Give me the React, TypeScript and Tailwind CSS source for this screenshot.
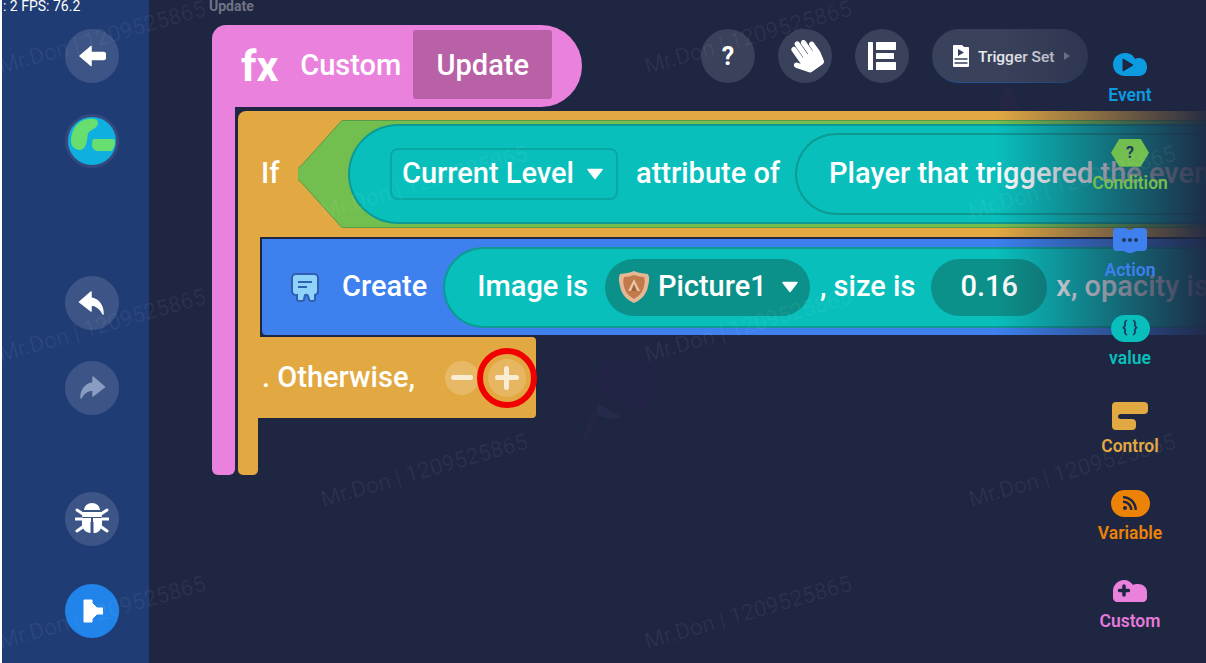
import React from "react";
import { FaHandPaper, FaRss } from "react-icons/fa";

const roboto = "font-['Roboto',sans-serif]";

function Watermark({ x, y }: { x: number; y: number }) {
  return (
    <div
      className="absolute text-[22.4px] leading-none whitespace-nowrap text-white/[0.06] -rotate-[16deg] -translate-x-1/2 -translate-y-1/2 pointer-events-none z-30"
      style={{ left: x, top: y }}
    >
      Mr.Don | 1209525865
    </div>
  );
}

function CircleBtn({ children, className = "bg-white/[0.13]" }: { children: React.ReactNode; className?: string }) {
  return <div className={`w-[54px] h-[54px] rounded-full flex items-center justify-center shrink-0 ${className}`}>{children}</div>;
}

function Caret({ className = "" }: { className?: string }) {
  return (
    <svg width="18" height="12" viewBox="0 0 18 12" className={className}>
      <path d="M2 1.5h14L9 10.5z" fill="#fff" stroke="#fff" strokeWidth="1.5" strokeLinejoin="round" />
    </svg>
  );
}

function Sidebar() {
  return (
    <div className="w-[147px] h-full bg-[#1f3c74] flex flex-col pl-[63px] pt-[29px] shrink-0">
      <CircleBtn>
        <svg width="28" height="22" viewBox="0 0 28 22">
          <path d="M13 1.5 2 11l11 9.5v-6h12a3.5 3.5 0 0 0 0-7H13z" fill="#fff" stroke="#fff" strokeWidth="1.5" strokeLinejoin="round" />
        </svg>
      </CircleBtn>
      <div className="mt-[31px] w-[54px] h-[54px] rounded-full bg-[#36497f] flex items-center justify-center">
        <svg width="48" height="48" viewBox="0 0 48 48">
          <circle cx="24" cy="24" r="24" fill="#0fafdf" />
          <path d="M3 24C3 12 10 3 20 2c6-1 10 0 10 4 0 5-6 6-9 9-2 2-1 7-3 12-1 4-4 6-7 6-4-1-8-3-8-9z" fill="#68de6f" />
          <path d="M25 22h20c1 0 2 1 2 3 0 4-2 8-4 9H31c-4 0-7-2-7-6 0-3 1-6 1-6z" fill="#68de6f" />
        </svg>
      </div>
      <CircleBtn className="mt-[108px] bg-white/[0.13]">
        <svg width="28" height="24" viewBox="0 0 28 24">
          <path d="M13 1 1.5 11 13 20v-6c5 0 9 3 12 9 0-9-5-15-12-16z" fill="#fff" stroke="#fff" strokeWidth="1.5" strokeLinejoin="round" />
        </svg>
      </CircleBtn>
      <CircleBtn className="mt-[31px] bg-white/[0.13]">
        <svg width="28" height="24" viewBox="0 0 28 24">
          <path d="M15 1 26.5 11 15 20v-6c-5 0-9 2-12 8 0-9 5-14 12-15z" fill="#8a9dc0" stroke="#8a9dc0" strokeWidth="1.5" strokeLinejoin="round" />
        </svg>
      </CircleBtn>
      <CircleBtn className="mt-[77px] bg-white/[0.13]">
        <svg width="34" height="34" viewBox="0 0 34 34">
          <path d="M9 8a8 7 0 0 1 16 0z" fill="#fff" />
          <path d="M7 10h20v2c0 1 0 2-.5 3H7.5C7 14 7 13 7 12zM7 16h9v15c-5 0-9-4-9-9zM18 16h9v6c0 5-4 9-7 9h-2z" fill="#fff" />
          <path d="M15.5 20h3v11h-3z" fill="#3d5488" />
          <path d="M2 8l6 4M32 8l-6 4M1 17h6M33 17h-6M2 29l7-5M32 29l-7-5" stroke="#fff" strokeWidth="3" strokeLinecap="round" />
        </svg>
      </CircleBtn>
      <CircleBtn className="mt-[38px] bg-[#2084ea]">
        <svg width="22" height="24" viewBox="0 0 22 24">
          <path d="M3 1h8v3l5 5h6v6h-6l-5 5v3H3z" fill="#fff" stroke="#fff" strokeWidth="1" strokeLinejoin="round" />
        </svg>
      </CircleBtn>
    </div>
  );
}

function Toolbar() {
  return (
    <div className="flex mt-[4px] ml-[119px] gap-[23px] items-start">
      <CircleBtn className="bg-[#3a415b]">
        <span className="text-white text-[25px] font-bold leading-none">?</span>
      </CircleBtn>
      <CircleBtn className="bg-[#3a415b]">
        <FaHandPaper className="text-white text-[34px] -rotate-[35deg]" />
      </CircleBtn>
      <CircleBtn className="bg-[#3a415b]">
        <svg width="28" height="28" viewBox="0 0 28 28" fill="#fff">
          <rect x="0" y="0" width="5" height="28" rx="0.5" />
          <rect x="8" y="0" width="20" height="8" rx="0.5" />
          <rect x="8" y="11" width="18" height="6" rx="0.5" />
          <rect x="8" y="20" width="20" height="8" rx="0.5" />
        </svg>
      </CircleBtn>
      <div className="w-[156px] h-[54px] rounded-[27px] bg-[#3a415b] border-b border-[#26538f] flex items-center pl-[19px] gap-[7px]">
        <svg width="20" height="24" viewBox="0 0 20 24">
          <path d="M2 2a1 1 0 0 1 1-1h8l2 2h4a1 1 0 0 1 1 1v18a1 1 0 0 1-1 1H3a1 1 0 0 1-1-1z" fill="#fff" />
          <path d="M7 5l6 3.5-6 3.5z" fill="#3a415b" />
          <path d="M3.5 15h13M3.5 19h13" stroke="#3a415b" strokeWidth="1.5" />
        </svg>
        <span className="text-white/90 text-[15.5px] font-medium leading-none pt-[4px]">Trigger Set</span>
        <svg width="8" height="10" viewBox="0 0 8 10" className="ml-[2px]"><path d="M1 1l6 4-6 4z" fill="#8a90a3" /></svg>
      </div>
    </div>
  );
}

const TIP = "M50 .5H46c-2 0-3 .5-4 2L3 46a9 9 0 0 0 0 16l39 43.5c1 1.5 2 2 4 2H50";

function ConditionRow() {
  return (
    <div className="h-[126px] bg-[#e2a842] rounded-tl-[8px] flex items-center pl-[23px] text-white">
      <span className="w-[37px] shrink-0 text-[29px] font-[550]">If</span>
      <svg width="50" height="108" viewBox="0 0 50 108" className="shrink-0">
        <path d={TIP + "z"} fill="#72bf4f" />
        <path d={TIP} fill="none" stroke="#5a9a4a" strokeWidth="1" />
      </svg>
      <div className="flex-1 h-[108px] bg-[#72bf4f] border-y border-[#5a9a4a] flex items-center">
        <div className="flex-1 h-[100px] bg-[#08bfbc] border-y-2 border-l-2 border-[#0c9a93] rounded-l-[50px] flex items-center pl-[40px]">
          <div className="w-[228px] h-[52px] rounded-[8px] border-2 border-[#0aa8a3] flex items-center pl-[10px] shrink-0">
            <span className="text-[29px] font-[550] whitespace-nowrap">Current Level</span>
            <Caret className="ml-[12px]" />
          </div>
          <span className="ml-[18px] text-[29px] font-[550] whitespace-nowrap">attribute of</span>
          <div className="ml-[15px] w-[600px] h-[82px] rounded-l-[41px] border-y-2 border-l-2 border-[#0c9a93] flex items-center pl-[32px] shrink-0">
            <span className="text-[29px] font-[550] whitespace-nowrap">Player that triggered the event</span>
          </div>
        </div>
      </div>
    </div>
  );
}

function CreateRow() {
  return (
    <div className="flex h-[100px]">
      <div className="w-[22px] shrink-0 bg-[#e2a842]" />
      <div className="flex-1 h-[98px] bg-[#3d80ee] border-t-[2px] border-l-[2px] border-[#1e2642] rounded-bl-[5px] flex items-center pl-[28px] text-white">
        <svg width="30" height="31" viewBox="0 0 30 31" className="shrink-0">
          <path d="M6 2h18a4 4 0 0 1 4 4v13a4 4 0 0 1-3 4v4a2 2 0 0 1-2 2h-2a2 2 0 0 1-2-2l-1-3a2 2 0 0 0-3-1l-1 4a2 2 0 0 1-2 2H9a2 2 0 0 1-2-2v-4a4 4 0 0 1-5-4V6a4 4 0 0 1 4-4z" fill="#8fd3fb" stroke="#2f5fb0" strokeWidth="2" />
          <path d="M8 10h14M8 15h9" stroke="#2f5fb0" strokeWidth="2" />
        </svg>
        <span className="ml-[22px] text-[29px] font-[550]">Create</span>
        <div className="ml-[16px] flex-1 h-[81px] bg-[#08bfbc] border-y-2 border-l-2 border-[#0c9a93] rounded-l-[41px] flex items-center pl-[32px] whitespace-nowrap">
          <span className="text-[29px] font-[550]">Image is</span>
          <div className="ml-[17px] w-[205px] h-[57px] rounded-[29px] bg-[#0b9189] flex items-center pl-[13px] shrink-0">
            <svg width="32" height="34" viewBox="0 0 32 34" className="shrink-0">
              <path d="M16 1c4 2 9 2 14 3 2 4 1 8 0 12-1 8-7 14-14 17C9 30 3 24 2 16 1 12 0 8 2 4c5-1 10-1 14-3z" fill="#e5b894" />
              <path d="M16 5c3 1 7 2 10 2 1 3 1 6 0 9-1 6-5 10-10 13-5-3-9-7-10-13-1-3-1-6 0-9 3 0 7-1 10-2z" fill="#c07a4c" />
              <path d="M16 9l6 12H10z" fill="#eac4a2" />
              <path d="M16 14l3 7h-6z" fill="#a5603a" />
            </svg>
            <span className="ml-[8px] text-[29px] font-[550]">Picture1</span>
            <Caret className="ml-[14px]" />
          </div>
          <span className="ml-[10px] text-[29px] font-[550]">, size is</span>
          <div className="ml-[16px] w-[116px] h-[57px] rounded-[29px] bg-[#0b9189] flex items-center justify-center shrink-0">
            <span className="text-[29px] font-[550]">0.16</span>
          </div>
          <span className="ml-[9px] text-[29px] font-[550]">x, opacity is</span>
        </div>
      </div>
    </div>
  );
}

function OtherwiseRow() {
  return (
    <div className="relative w-[298px] h-[81px] bg-[#e2a842] rounded-r-[4px] flex items-center pl-[24px] text-white">
      <span className="text-[29px] font-[550] whitespace-nowrap">. Otherwise,</span>
      <div className="ml-[30px] w-[34px] h-[34px] rounded-full bg-white/[0.2] flex items-center justify-center shrink-0">
        <div className="w-[22px] h-[5px] rounded-full bg-[#f8ecd4]" />
      </div>
      <div className="ml-[9px] w-[38px] h-[38px] rounded-full bg-white/[0.17] relative flex items-center justify-center shrink-0">
        <div className="absolute w-[24px] h-[5px] rounded-full bg-[#f8ecd4]" />
        <div className="absolute w-[5px] h-[24px] rounded-full bg-[#f8ecd4]" />
        <div className="absolute w-[60px] h-[60px] rounded-full border-[6px] border-[#f00000]" />
      </div>
    </div>
  );
}

function Blocks() {
  return (
    <div className="flex ml-[63px] w-[1100px]">
      <div className="w-[23px] h-[368px] bg-[#ea82dd] rounded-b-[6px] shrink-0" />
      <div className="ml-[3px] mt-[4px] flex-1 flex flex-col">
        <ConditionRow />
        <CreateRow />
        <OtherwiseRow />
        <div className="w-[20px] h-[57px] bg-[#e2a842] rounded-b-[5px]" />
      </div>
    </div>
  );
}

function Header() {
  return (
    <div className="w-[370px] h-[82px] bg-[#ea82dd] rounded-tl-[14px] rounded-r-[41px] flex items-center pl-[29px] text-white shrink-0">
      <span className="text-[43px] font-bold leading-none">fx</span>
      <span className="ml-[22px] text-[29px] font-[550]">Custom</span>
      <div className="ml-[12px] w-[139px] h-[69px] mb-[3px] bg-[#b961a6] rounded-[3px] flex items-center justify-center pt-[2px]">
        <span className="text-[29px] font-[550]">Update</span>
      </div>
    </div>
  );
}

function RailItem({ label, color, children }: { label: string; color: string; children: React.ReactNode }) {
  return (
    <div className="h-[87.7px] flex flex-col items-center">
      <div className="h-[30px] w-full flex items-center justify-center">{children}</div>
      <span className={`mt-[5px] text-[17.5px] font-semibold leading-[20px] ${color}`}>{label}</span>
    </div>
  );
}

function Rail() {
  return (
    <div className="absolute right-[16px] top-[50px] w-[120px] flex flex-col z-20">
      <RailItem label="Event" color="text-[#0c9be0]">
        <svg width="36" height="26" viewBox="0 0 36 26">
          <path d="M13 1c5 0 8 2 10 6 1-1 2-1 4-1 5 0 8 4 8 9 0 5-3 9-8 9H13C6 24 1 19 1 12.5S6 1 13 1z" fill="#0c9be0" />
          <path d="M11 7l10 6-10 6z" fill="#1e2642" strokeLinejoin="round" stroke="#1e2642" strokeWidth="1" />
        </svg>
      </RailItem>
      <RailItem label="Condition" color="text-[#72bf4f]">
        <div className="w-[38px] h-[28px] bg-[#72bf4f] [clip-path:polygon(22%_0,78%_0,100%_50%,78%_100%,22%_100%,0_50%)] flex items-center justify-center text-[#1e3a5f] font-bold text-[16px]">?</div>
      </RailItem>
      <RailItem label="Action" color="text-[#3d80ee]">
        <svg width="36" height="26" viewBox="0 0 36 26">
          <path d="M5 1h8c2 0 3 2 5 2s3-2 5-2h8a4 4 0 0 1 4 4v15a4 4 0 0 1-4 4h-6c-2 0-3 2-7 2s-5-2-7-2H5a4 4 0 0 1-4-4V5a4 4 0 0 1 4-4z" fill="#3d80ee" />
          <circle cx="12" cy="13" r="2" fill="#1e3a5f" /><circle cx="18" cy="13" r="2" fill="#1e3a5f" /><circle cx="24" cy="13" r="2" fill="#1e3a5f" />
        </svg>
      </RailItem>
      <RailItem label="value" color="text-[#08bfbc]">
        <div className="w-[39px] h-[27px] rounded-full bg-[#08bfbc] flex items-center justify-center text-[#1e3a5f] text-[16px] font-medium gap-[5px] leading-none"><span>{"{"}</span><span>{"}"}</span></div>
      </RailItem>
      <RailItem label="Control" color="text-[#e2a842]">
        <svg width="36" height="28" viewBox="0 0 36 28">
          <path d="M4 0h28a4 4 0 0 1 4 4v4a4 4 0 0 1-4 4H9c-2 0-3 1-3 2.5S7 17 9 17h11a4 4 0 0 1 4 4v3a4 4 0 0 1-4 4H4a4 4 0 0 1-4-4V4a4 4 0 0 1 4-4z" fill="#e2a842" />
        </svg>
      </RailItem>
      <RailItem label="Variable" color="text-[#ec8306]">
        <div className="w-[39px] h-[27px] rounded-full bg-[#ec8306] flex items-center justify-center">
          <FaRss className="text-[#1e2642] text-[16px]" />
        </div>
      </RailItem>
      <RailItem label="Custom" color="text-[#e57ad9]">
        <svg width="36" height="24" viewBox="0 0 36 24">
          <path d="M12 1c4 0 7 2 9 5 1-1 3-1 5-1 5 0 9 3 9 8v6c0 2-2 4-4 4H5c-2 0-4-2-4-4v-7C1 6 6 1 12 1z" fill="#ea82dd" />
          <path d="M12 7v9M7.5 11.5h9" stroke="#1e2642" strokeWidth="3.5" strokeLinecap="round" />
        </svg>
      </RailItem>
    </div>
  );
}

export default function App() {
  return (
    <div className={`relative w-[1206px] h-[663px] overflow-hidden bg-[#1e2642] flex ${roboto}`}>
      <div className="w-[2px] h-full bg-white shrink-0" />
      <Sidebar />
      <div className="flex-1 relative overflow-hidden">
        <span className="absolute left-[60px] -top-[4px] text-[14px] font-bold text-[#6f7484]">Update</span>
        <svg className="absolute left-[431px] top-[335px] opacity-60" width="90" height="110" viewBox="0 0 90 110">
          <path d="M22 25 78 25C82 40 80 60 62 80L45 72 22 60C13 50 15 35 22 25z" fill="#262448" />
          <path d="M17 68 42 82 30 84 17 80z" fill="#2a3052" />
          <path d="M15 78 5 103" stroke="#2b2744" strokeWidth="5" strokeLinecap="round" />
        </svg>
        <svg className="absolute left-[849px] top-[84px] opacity-50" width="24" height="27" viewBox="0 0 24 27">
          <path d="M8 2c5 0 10 6 12 14 1 5 1 8 0 11H3C1 18 3 6 8 2z" fill="#2a2744" />
        </svg>
        <div className="pt-[25px]">
          <div className="flex ml-[63px]">
            <Header />
            <Toolbar />
          </div>
          <Blocks />
        </div>
      </div>
      <div className="absolute right-0 top-0 w-[210px] h-full bg-gradient-to-r from-[#1e2642]/0 to-[#1e2642]/95 z-10" />
      <Rail />
      <div className="absolute left-[3px] -top-[1px] text-white text-[14px] z-40 leading-[15px] whitespace-nowrap">: 2 FPS: 76.2</div>
      <Watermark x={102} y={37} />
      <Watermark x={102} y={325} />
      <Watermark x={102} y={612} />
      <Watermark x={424} y={182} />
      <Watermark x={424} y={470} />
      <Watermark x={748} y={37} />
      <Watermark x={748} y={325} />
      <Watermark x={748} y={612} />
      <Watermark x={1072} y={182} />
      <Watermark x={1072} y={470} />
    </div>
  );
}
